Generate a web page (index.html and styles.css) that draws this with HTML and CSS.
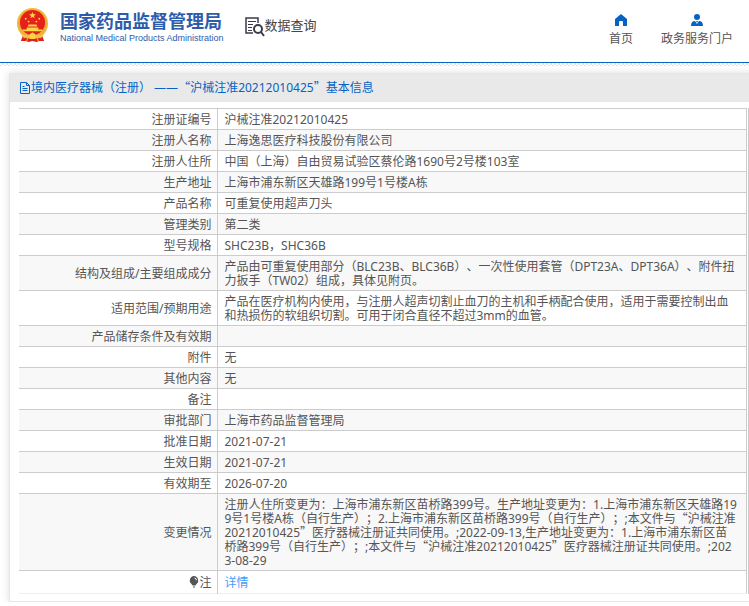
FILE: index.html
```
<!DOCTYPE html>
<html lang="zh-CN">
<head>
    <meta charset="UTF-8">
    <meta name="viewport" content="width=device-width, initial-scale=1.0">
    <title>国家药品监督管理局 数据查询</title>
    <link rel="stylesheet" href="styles.css">
</head>
<body>
    <header class="header">
        <a class="logo" href="#">
            <svg class="emblem" viewBox="0 0 34 36" aria-hidden="true">
                <path d="M8 26 L26 26 L29 34 L24 34 L21 35 L17 34 L13 35 L10 34 L5 34 Z" fill="#d8241c"/>
                <circle cx="17" cy="16" r="16" fill="#f0b93c"/>
                <circle cx="17" cy="16" r="14" fill="none" stroke="#e3a52f" stroke-width="1" stroke-dasharray="2 1"/>
                <circle cx="17" cy="15" r="13" fill="#e6211b"/>
                <path d="M17 4l1 2.300 2.500.2-2 1.600.7 2.400-2.200-1.300-2.200 1.300.7-2.400-2-1.600 2.500-.2z" fill="#f8d648"/>
                <g fill="#f8d648">
                    <circle cx="10" cy="11" r="1"/>
                    <circle cx="13" cy="14" r="1"/>
                    <circle cx="21" cy="14" r="1"/>
                    <circle cx="24" cy="11" r="1"/>
                    <path d="M12 19l1-2h8l1 2zM11 20h12v2h4v2H7v-2h4z"/>
                </g>
                <path d="M4 25q5 4 9 3l4-3 4 3q4 1 9-3l-4 6-5-1-4 2-4-2-5 1z" fill="#f4c542"/>
                <circle cx="17" cy="29" r="3" fill="#f8d648"/>
                <path d="M9 30l3 1-1 3M25 30l-3 1 1 3" fill="none" stroke="#f4b63a"/>
            </svg>
            <span class="logo-text">
                <span class="logo-cn">国家药品监督管理局</span>
                <span class="logo-en">National Medical Products Administration</span>
            </span>
        </a>
        <a class="search-title" href="#">
            <svg width="20" height="20" viewBox="0 0 20 20" fill="none" stroke="#3c3a4a" aria-hidden="true">
                <path d="M13 6V1H1v15h7" stroke-width="1.500"/>
                <path d="M3 4.500h8M3 7.500h5M3 10.500h4M3 13.500h4"/>
                <circle cx="13" cy="12" r="4" stroke-width="2" fill="#fff"/>
                <path d="M16 15l3 4" stroke-width="2"/>
            </svg>
            <span>数据查询</span>
        </a>
        <nav class="nav">
            <a href="#">
                <svg width="12" height="12" viewBox="0 0 12 12" aria-hidden="true">
                    <path d="M6 0L0 5v7h4V8q0-1 1-1h2q1 0 1 1v4h4V5z" fill="#0762c5"/>
                </svg>
                <span>首页</span>
            </a>
            <a href="#">
                <svg width="12" height="12" viewBox="0 0 12 12" fill="#0762c5" aria-hidden="true">
                    <circle cx="6" cy="3" r="3"/>
                    <path d="M0 12q0-5 4-5l2 3 2-3q4 0 4 5z"/>
                    <path d="M5 7h2l-1 2z"/>
                </svg>
                <span>政务服务门户</span>
            </a>
        </nav>
    </header>

    <main class="panel">
        <h1 class="panel-title">
            <svg width="12" height="12" viewBox="0 0 12 12" fill="none" stroke="#0762c5" aria-hidden="true">
                <path d="M1.500.5h6l3 3v8h-9zM7.500.5v3h3M3.500 4.500h2M3.500 6.500h5M3.500 8.500h5"/>
            </svg>
            <span>境内医疗器械（注册） ——<q>沪械注准20212010425</q>基本信息</span>
        </h1>
        <div class="table-wrap">
            <table class="info">
                <tbody>
                    <tr><th scope="row">注册证编号</th><td>沪械注准20212010425</td></tr>
                    <tr><th scope="row">注册人名称</th><td>上海逸思医疗科技股份有限公司</td></tr>
                    <tr><th scope="row">注册人住所</th><td>中国（上海）自由贸易试验区蔡伦路1690号2号楼103室</td></tr>
                    <tr><th scope="row">生产地址</th><td>上海市浦东新区天雄路199号1号楼A栋</td></tr>
                    <tr><th scope="row">产品名称</th><td>可重复使用超声刀头</td></tr>
                    <tr><th scope="row">管理类别</th><td>第二类</td></tr>
                    <tr><th scope="row">型号规格</th><td>SHC23B，SHC36B</td></tr>
                    <tr><th scope="row">结构及组成/主要组成成分</th><td>产品由可重复使用部分（BLC23B、BLC36B）、一次性使用套管（DPT23A、DPT36A）、附件扭力扳手（TW02）组成，具体见附页。</td></tr>
                    <tr><th scope="row">适用范围/预期用途</th><td>产品在医疗机构内使用，与注册人超声切割止血刀的主机和手柄配合使用，适用于需要控制出血和热损伤的软组织切割。可用于闭合直径不超过3mm的血管。</td></tr>
                    <tr><th scope="row">产品储存条件及有效期</th><td></td></tr>
                    <tr><th scope="row">附件</th><td>无</td></tr>
                    <tr><th scope="row">其他内容</th><td>无</td></tr>
                    <tr><th scope="row">备注</th><td></td></tr>
                    <tr><th scope="row">审批部门</th><td>上海市药品监督管理局</td></tr>
                    <tr><th scope="row">批准日期</th><td>2021-07-21</td></tr>
                    <tr><th scope="row">生效日期</th><td>2021-07-21</td></tr>
                    <tr><th scope="row">有效期至</th><td>2026-07-20</td></tr>
                    <tr><th scope="row">变更情况</th><td>注册人住所变更为：上海市浦东新区苗桥路399号。生产地址变更为：1.上海市浦东新区天雄路199号1号楼A栋（自行生产）；2.上海市浦东新区苗桥路399号（自行生产）；;本文件与<q>沪械注准20212010425</q>医疗器械注册证共同使用。;2022-09-13,生产地址变更为：1.上海市浦东新区苗桥路399号（自行生产）；;本文件与<q>沪械注准20212010425</q>医疗器械注册证共同使用。;2023-08-29</td></tr>
                    <tr class="note">
                        <th scope="row">
                            <svg width="10" height="12" viewBox="0 0 10 12" aria-hidden="true">
                                <path d="M5 0a4.500 4.500 0 0 1 2.500 8L6.500 9.500h-3L2.500 8A4.500 4.500 0 0 1 5 0z" fill="#555"/>
                                <path d="M4 11h2" stroke="#555"/>
                                <path d="M5.500 2q2 .3 2 2.300" fill="none" stroke="#fff"/>
                            </svg>注</th>
                        <td><a href="#">详情</a></td>
                    </tr>
                </tbody>
            </table>
        </div>
    </main>
</body>
</html>
```
FILE: styles.css
```
* {
    box-sizing: border-box;
}

body {
    margin: 0;
    background: #fff;
    color: #555;
    font-family: "Noto Sans", "Noto Sans CJK SC", sans-serif;
    font-size: 12px;
    line-height: 14px;
    text-spacing-trim: space-all;
    overflow-x: hidden;
}

a {
    color: inherit;
    text-decoration: none;
}

/* full-width Chinese quotation marks */
q {
    quotes: "“" "”";
}

q::before,
q::after {
    font-family: "Noto Sans CJK SC", sans-serif;
    line-height: 0;
}

/* white bar, blue line, then a thin dotted strip */
.header {
    display: flex;
    align-items: flex-start;
    height: 66px;
    padding: 8px 16px 0;
    background:
        linear-gradient(#fff 62px, #0762c5 62px) 0 0 / 100% 63px no-repeat,
        repeating-conic-gradient(#e4e4e4 0 25%, #fff 0 50%) 0 63px / 4px 4px;
}

.logo {
    display: flex;
    gap: 11px;
}

.emblem {
    width: 33px;
    height: 35px;
}

.logo-text {
    display: flex;
    flex-direction: column;
    color: #2e5cab;
    white-space: nowrap;
}

.logo-cn {
    font-family: "Noto Sans CJK SC", sans-serif;
    font-size: 18px;
    font-weight: bold;
    line-height: 24px;
}

.logo-en {
    font-family: "Liberation Sans", sans-serif;
    font-size: 9px;
    line-height: 12px;
}

.search-title {
    display: flex;
    margin: 9px 0 0 21px;
    color: #444;
    font-size: 13px;
    line-height: 16px;
}

.nav {
    display: flex;
    gap: 28px;
    margin: 6px 0 0 auto;
}

.nav a {
    display: flex;
    flex-direction: column;
    align-items: center;
    gap: 6px;
}

.panel {
    margin: 7px -10px 0 9px;
    padding-bottom: 7px;
    border: 1px solid #e6e6e6;
    box-shadow: 0 0 8px #ddd;
}

.panel-title {
    display: flex;
    align-items: center;
    height: 28px;
    margin: 0;
    padding-left: 9px;
    background: #e9e9e9;
    border-bottom: 1px solid #e4e8f2;
    color: #0762c5;
    font-size: 12px;
    font-weight: normal;
}

.table-wrap {
    margin: 6px 9px 0;
    padding-right: 1px;
    border-right: 1px solid #ccc;
}

.info {
    width: 100%;
    border-collapse: collapse;
    border-right: 1px solid #ccc;
    border-bottom: 1px solid #eee;
}

.info th,
.info td {
    padding: 4px 5px 2px;
    border-top: 1px solid #ccc;
    vertical-align: middle;
    word-break: break-all;
}

.info th {
    width: 198px;
    border-right: 1px solid #ccc;
    font-weight: normal;
    text-align: right;
}

.info td {
    height: 21px;
    padding-left: 7px;
    padding-right: 9px;
}

.info tr:nth-child(even) {
    background: #f8f8f8;
}

.info .note td {
    height: 23px;
}

.note th svg {
    vertical-align: -1px;
}

.note a {
    color: #409eff;
}
```
